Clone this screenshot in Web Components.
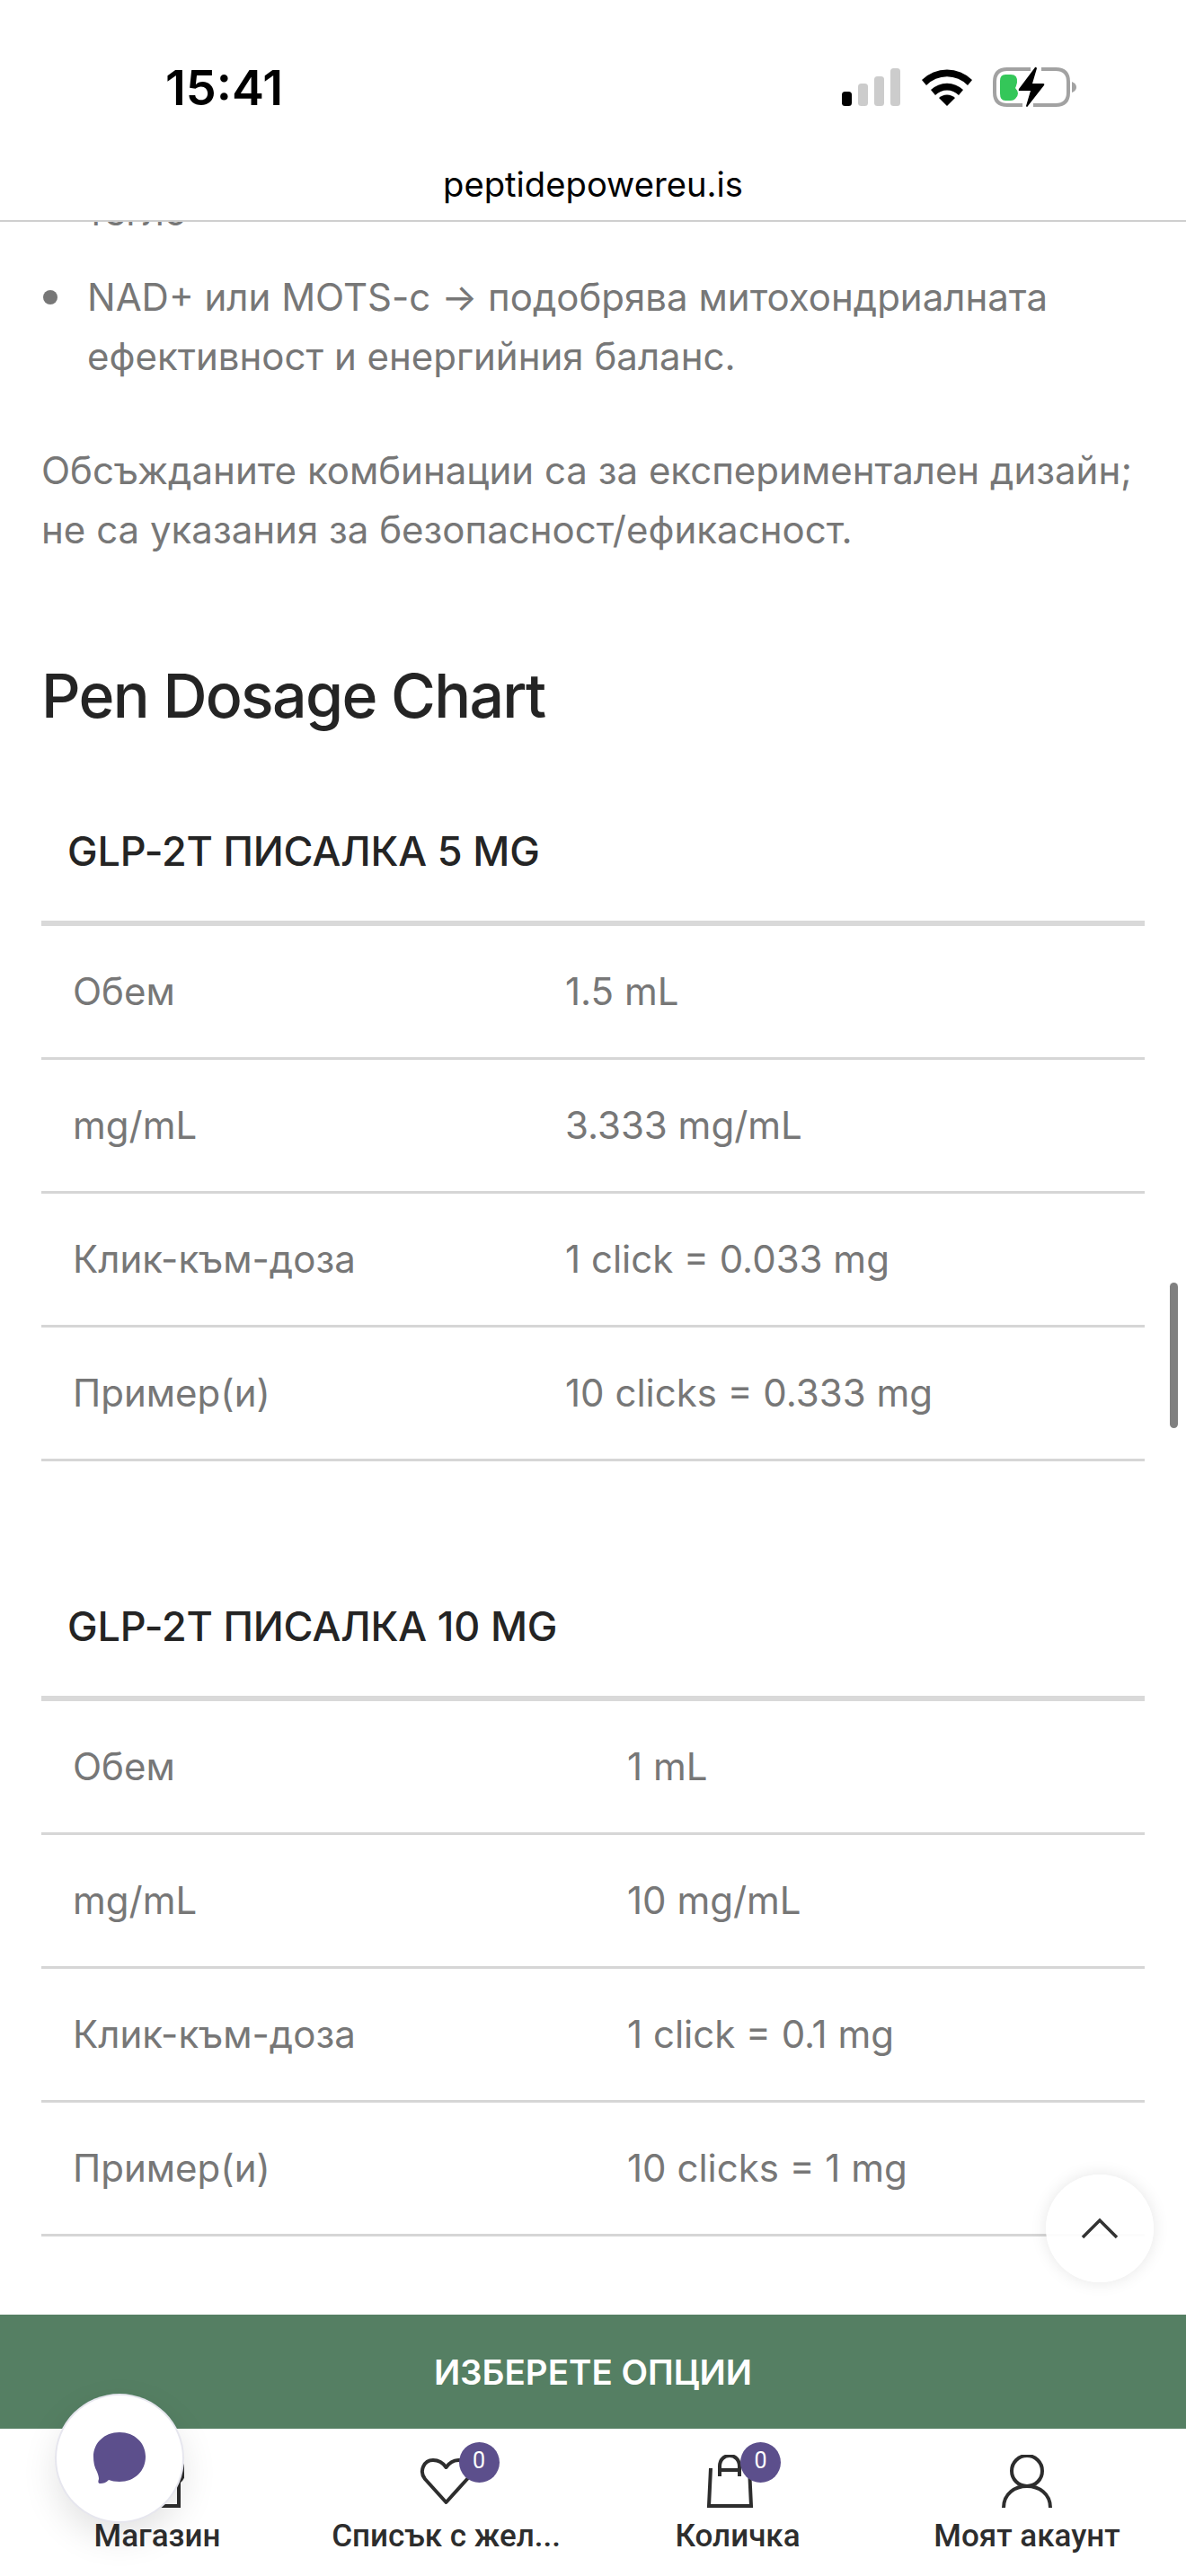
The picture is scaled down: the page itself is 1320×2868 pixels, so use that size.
<!DOCTYPE html>
<html lang="bg">
<head>
<meta charset="utf-8">
<title>Pen Dosage Chart</title>
<style>
  html, body { margin: 0; padding: 0; background: #fff; }
  body { width: 1320px; height: 2868px; overflow: hidden; position: relative; font-family: Inter, "Liberation Sans", sans-serif; }
</style>
</head>
<body>
<phone-screen>
  <browser-bar slot="top" time="15:41" host-name="peptidepowereu.is"></browser-bar>
  <article-body>
    <p class="cut">тегло</p>
    <bullet-item>NAD+ или MOTS-c → подобрява митохондриалната<br>ефективност и енергийния баланс.</bullet-item>
    <text-para>Обсъжданите комбинации са за експериментален дизайн;<br>не са указания за безопасност/ефикасност.</text-para>
    <section-title>Pen Dosage Chart</section-title>
    <dose-table title="GLP-2T ПИСАЛКА 5 MG" col="629">
      <dose-row label="Обем" value="1.5 mL"></dose-row>
      <dose-row label="mg/mL" value="3.333 mg/mL"></dose-row>
      <dose-row label="Клик-към-доза" value="1 click = 0.033 mg"></dose-row>
      <dose-row label="Пример(и)" value="10 clicks = 0.333 mg"></dose-row>
    </dose-table>
    <dose-table title="GLP-2T ПИСАЛКА 10 MG" col="698">
      <dose-row label="Обем" value="1 mL"></dose-row>
      <dose-row label="mg/mL" value="10 mg/mL"></dose-row>
      <dose-row label="Клик-към-доза" value="1 click = 0.1 mg"></dose-row>
      <dose-row label="Пример(и)" value="10 clicks = 1 mg"></dose-row>
    </dose-table>
  </article-body>
  <sticky-footer slot="bottom"></sticky-footer>
</phone-screen>

<script>
const phoneTemplate = document.createElement("template");
phoneTemplate.innerHTML = `
  <style>
    :host { display: flex; flex-direction: column; width: 1320px; height: 2868px; overflow: hidden; position: relative; background: #fff; }
    .content { flex: 1; min-height: 0; overflow: hidden; position: relative; }
    .scrollbar { position: absolute; right: 9px; top: 1428px; width: 9px; height: 162px; border-radius: 5px; background: #808080; }
  </style>
  <slot name="top"></slot>
  <div class="content"><slot></slot></div>
  <slot name="bottom"></slot>
  <div class="scrollbar"></div>
`;
class PhoneScreen extends HTMLElement {
  constructor() {
    super();
    this.attachShadow({ mode: "open" });
    this.shadowRoot.appendChild(phoneTemplate.content.cloneNode(true));
  }
}
customElements.define("phone-screen", PhoneScreen);

class BrowserBar extends HTMLElement {
  constructor() {
    super();
    this.attachShadow({ mode: "open" });
    this.shadowRoot.innerHTML = `
      <style>
        :host { display: block; height: 247px; box-sizing: border-box; border-bottom: 2px solid #cfcfcf; background: #fff; font-family: Inter, "Liberation Sans", sans-serif; color: #000; position: relative; z-index: 2; }
        .status { display: flex; justify-content: space-between; align-items: center; padding: 48px 0 0 184px; box-sizing: border-box; height: 146px; }
        .time { font-size: 54px; font-weight: 600; }
        .icons { display: flex; align-items: center; gap: 22px; margin-right: 121px; }
        svg { display: block; }
        .url { text-align: center; font-size: 38.2px; line-height: 46px; margin-top: 36px; }
      </style>
      <div class="status">
        <span class="time">${this.getAttribute("time")}</span>
        <div class="icons">
          <svg width="66" height="42" viewBox="0 0 66 42">
            <rect x="0" y="26" width="11" height="16" rx="3.5" fill="#000"/>
            <rect x="18" y="17" width="11" height="25" rx="3.5" fill="#ccc"/>
            <rect x="36" y="9" width="11" height="33" rx="3.5" fill="#ccc"/>
            <rect x="54" y="0" width="11" height="42" rx="3.5" fill="#ccc"/>
          </svg>
          <svg width="58" height="42" viewBox="0 0 58 42">
            <path d="M1 13 A40 40 0 0 1 57 13 L52 19 A32 32 0 0 0 6 19 Z" fill="#000"/>
            <path d="M11 24 A26 26 0 0 1 47 24 L42 30 A18 18 0 0 0 16 30 Z" fill="#000"/>
            <path d="M20 33 A13 13 0 0 1 38 33 L29 42 Z" fill="#000"/>
          </svg>
          <svg width="94" height="46" viewBox="0 0 94 46">
            <path d="M42 3 H16 Q2 3 2 17 V29 Q2 43 16 43 H33 M45 43 H70 Q84 43 84 29 V17 Q84 3 70 3 H54" fill="none" stroke="#a2a2a2" stroke-width="4"/>
            <path d="M88 17 Q93 19 93 23 Q93 27 88 29 Z" fill="#a2a2a2"/>
            <path d="M14 9 H20 Q28 9 27 18 Q26 22 25 24 Q31 30 25 36 Q23 38 20 38 H14 Q8 38 8 30 V16 Q8 9 14 9 Z" fill="#34c759"/>
            <path d="M47 1 L29 25 Q28 27 30 27 H42 L37 44 Q38 46 39 44 L57 21 Q58 19 56 19 H44 L49 2 Q48 0 47 1 Z" fill="#000"/>
          </svg>
        </div>
      </div>
      <div class="url">${this.getAttribute("host-name")}</div>
    `;
  }
}
customElements.define("browser-bar", BrowserBar);

class ArticleBody extends HTMLElement {
  constructor() {
    super();
    this.attachShadow({ mode: "open" });
    this.shadowRoot.innerHTML = `
      <style>
        :host { display: block; padding: 0 46px; margin-top: -44px; color: #777; font-family: Inter, "Liberation Sans", sans-serif; font-size: 42px; line-height: 66px; }
        ::slotted(p.cut) { margin: 0 0 0 51px; }
      </style>
      <slot></slot>
    `;
  }
}
customElements.define("article-body", ArticleBody);

class BulletItem extends HTMLElement {
  constructor() {
    super();
    this.attachShadow({ mode: "open" });
    this.shadowRoot.innerHTML = `
      <style>
        :host { display: block; position: relative; padding-left: 51px; margin-top: 29px; margin-bottom: 61px; }
        .dot { position: absolute; left: 2px; top: 25px; width: 16px; height: 16px; border-radius: 50%; background: #777; }
      </style>
      <span class="dot"></span><slot></slot>
    `;
  }
}
customElements.define("bullet-item", BulletItem);

class TextPara extends HTMLElement {
  constructor() {
    super();
    this.attachShadow({ mode: "open" });
    this.shadowRoot.innerHTML = `<style>:host { display: block; margin-bottom: 109px; }</style><slot></slot>`;
  }
}
customElements.define("text-para", TextPara);

class SectionTitle extends HTMLElement {
  constructor() {
    super();
    this.attachShadow({ mode: "open" });
    this.shadowRoot.innerHTML = `<style>:host { display: block; font-size: 68px; line-height: 84px; font-weight: 500; letter-spacing: -1.7px; color: #242424; margin-bottom: 92px; }</style><slot></slot>`;
  }
}
customElements.define("section-title", SectionTitle);

class DoseTable extends HTMLElement {
  constructor() {
    super();
    this.attachShadow({ mode: "open" });
    this.shadowRoot.innerHTML = `
      <style>
        :host { display: block; margin-bottom: 144px; }
        .head { padding: 0 0 0 29px; box-sizing: border-box; height: 123px; line-height: 80px; font-size: 45px; font-weight: 500; letter-spacing: -0.2px; color: #242424; border-bottom: 6px solid #d9d9d9; }
        .rows { display: block; --col: ${this.getAttribute("col") - 46}px; }
      </style>
      <div class="head">${this.getAttribute("title")}</div>
      <div class="rows"><slot></slot></div>
    `;
  }
}
customElements.define("dose-table", DoseTable);

class DoseRow extends HTMLElement {
  constructor() {
    super();
    this.attachShadow({ mode: "open" });
    this.shadowRoot.innerHTML = `
      <style>
        :host { display: grid; grid-template-columns: var(--col) 1fr; height: 149px; box-sizing: border-box; border-bottom: 3px solid #d6d6d6; align-items: center; font-size: 42px; line-height: 66px; color: #777; }
        span:first-of-type { padding-left: 35px; }
      </style>
      <span>${this.getAttribute("label")}</span><span>${this.getAttribute("value")}</span>
    `;
  }
}
customElements.define("dose-row", DoseRow);

class StickyFooter extends HTMLElement {
  constructor() {
    super();
    this.attachShadow({ mode: "open" });
    this.shadowRoot.innerHTML = `
      <style>
        :host { display: block; position: relative; z-index: 2; background: #fff; font-family: Roboto, "Liberation Sans", sans-serif; }
        .cta { height: 127px; display: flex; align-items: center; justify-content: center; background: #557f63; color: #fff; font-size: 38.5px; font-weight: 600; font-family: Inter, "Liberation Sans", sans-serif; }
        nav { height: 164px; display: grid; grid-template-columns: 322px 321px 328px 316px; padding-left: 14px; background: #fff; }
        .tab { display: flex; flex-direction: column; align-items: center; color: #2d2d2d; font-size: 35px; line-height: 44px; font-weight: 500; }
        .ico { position: relative; height: 60px; margin-top: 29px; margin-bottom: 9px; }
        .ico svg { display: block; }
        .badge { position: absolute; top: -14px; width: 45px; height: 45px; border-radius: 50%; background: #5c4f8c; color: #fff; font-size: 25px; line-height: 41px; text-align: center; font-weight: 400; }
        .chat { position: absolute; left: 63px; top: 90px; width: 140px; height: 140px; border-radius: 50%; background: #fff; box-shadow: 0 0 0 2px #e6e6ee, 0 16px 40px rgba(0,0,0,.12); display: flex; align-items: center; justify-content: center; }
        .top { position: absolute; left: 1164px; top: -156px; width: 120px; height: 120px; border-radius: 50%; background: rgba(255,255,255,.93); box-shadow: 0 0 18px rgba(0,0,0,.1); display: flex; align-items: center; justify-content: center; }
      </style>
      <div class="cta">ИЗБЕРЕТЕ ОПЦИИ</div>
      <nav>
        <div class="tab">
          <div class="ico"><svg width="60" height="60" viewBox="0 0 60 60" fill="none" stroke="#2d2d2d" stroke-width="4"><path d="M6 30 V57 H54 V30 M6 12 C0 18 0 26 6 30 C14 32 20 30 24 26 C30 32 42 32 54 30 C60 26 60 18 58 12 L54 3 H10 Z"/></svg></div>
          <span>Магазин</span>
        </div>
        <div class="tab">
          <div class="ico">
            <svg width="60" height="60" viewBox="0 0 60 60" fill="none" stroke="#2d2d2d" stroke-width="4" stroke-linejoin="round"><path d="M29.5 53 L6 27 C-1 18 5 6 15 6 C21 6 26 9 29.5 14 C33 9 38 6 44 6 C54 6 60 18 53 27 Z"/></svg>
            <span class="badge" style="left:44px">0</span>
          </div>
          <span>Списък с жел...</span>
        </div>
        <div class="tab">
          <div class="ico" style="margin-right:18px">
            <svg width="56" height="60" viewBox="0 0 56 60" fill="none" stroke="#2d2d2d" stroke-width="4"><path d="M7 15 L5 57 H52 L50 15 M17 24 V13 C17 -3 39 -3 39 13 V24 M17 17 H39"/></svg>
            <span class="badge" style="left:40px">0</span>
          </div>
          <span>Количка</span>
        </div>
        <div class="tab">
          <div class="ico"><svg width="56" height="60" viewBox="0 0 56 60" fill="none" stroke="#2d2d2d" stroke-width="4"><circle cx="28" cy="18" r="17"/><path d="M2 59 C2 27 54 27 54 59"/></svg></div>
          <span>Моят акаунт</span>
        </div>
      </nav>
      <div class="chat">
        <svg width="60" height="58" viewBox="0 0 60 58"><path d="M30 0 C47 0 59 12 59 27 C59 43 47 55 30 55 C25 55 21 54 18 53 C15 56 12 57 9 57 C6 57 6 55 7 52 C7 49 6 47 5 44 C2 39 1 33 1 27 C1 12 13 0 30 0 Z" fill="#5c4f8c"/></svg>
      </div>
      <div class="top">
        <svg width="42" height="24" viewBox="0 0 42 24" fill="none" stroke="#333" stroke-width="3.5"><path d="M2 22 L21 3 L40 22"/></svg>
      </div>
    `;
  }
}
customElements.define("sticky-footer", StickyFooter);
</script>
</body>
</html>
